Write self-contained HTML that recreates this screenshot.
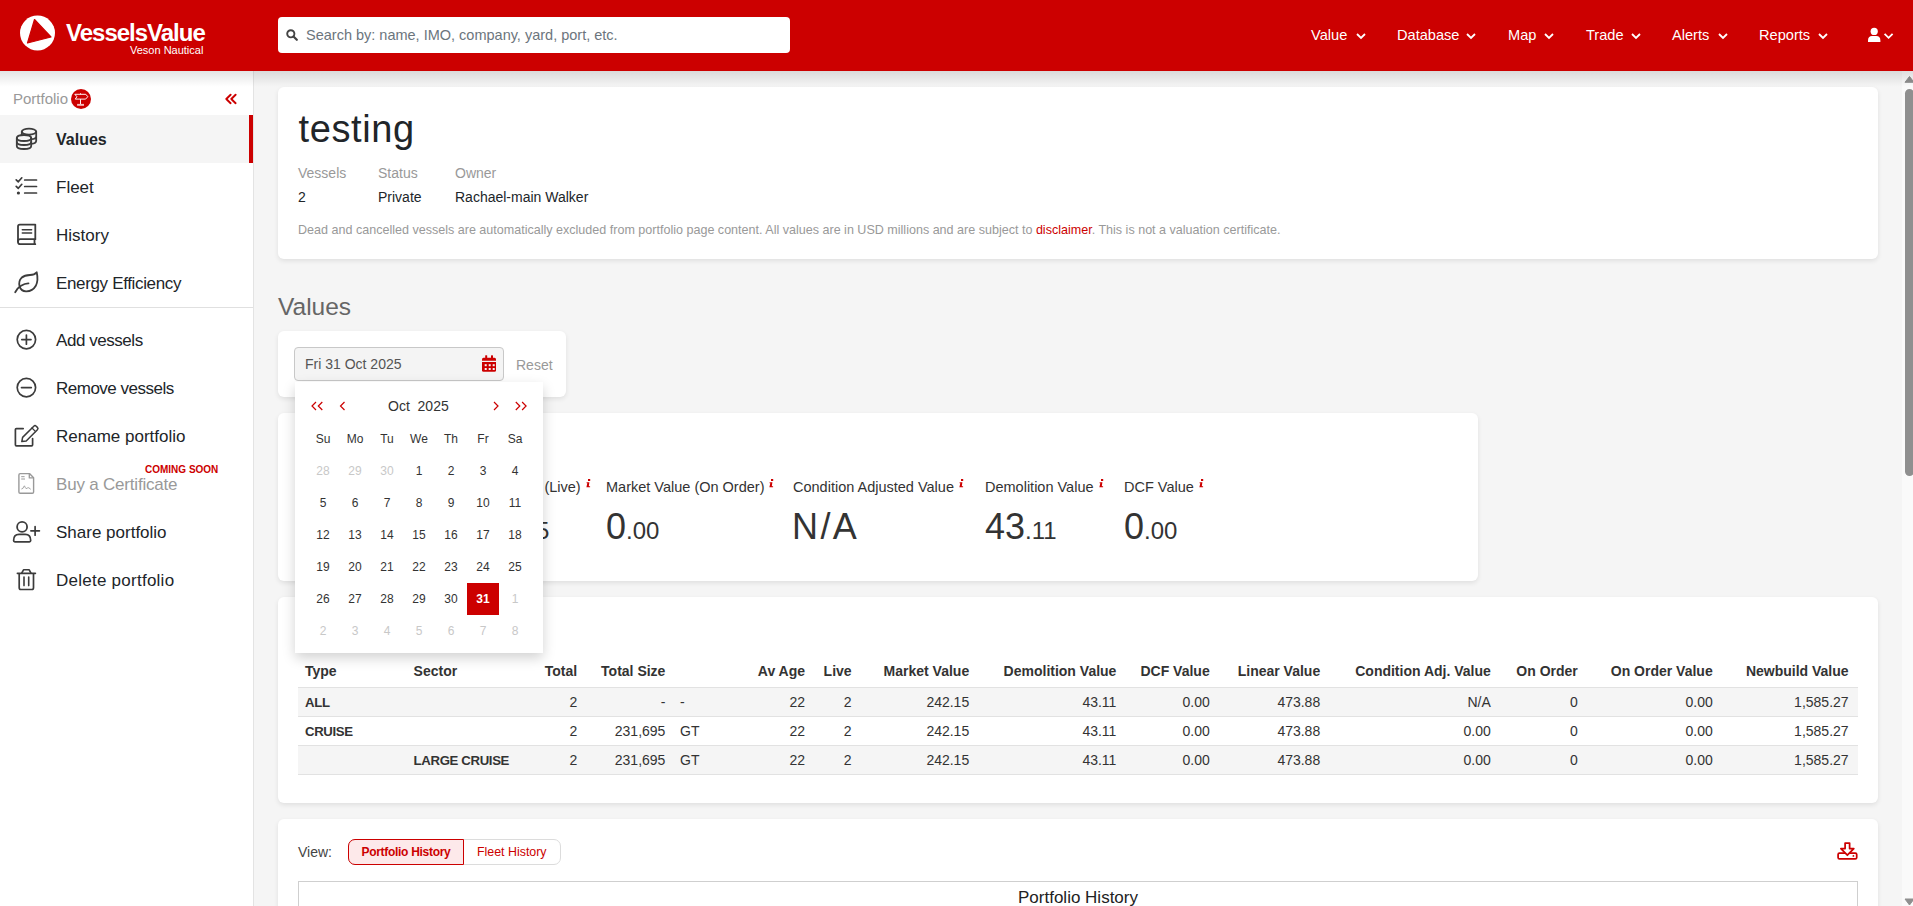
<!DOCTYPE html>
<html><head><meta charset="utf-8">
<style>
*{box-sizing:border-box;margin:0;padding:0}
html,body{width:1913px;height:906px;overflow:hidden}
body{font-family:"Liberation Sans",sans-serif;background:#f5f5f5;position:relative;color:#333}
.abs{position:absolute;white-space:nowrap}
#hdr{position:absolute;left:0;top:0;width:1913px;height:71px;background:#cc0000;z-index:5}
#hshadow{position:absolute;left:0;top:71px;width:1913px;height:16px;background:linear-gradient(rgba(0,0,0,0.11),rgba(0,0,0,0.02) 80%,rgba(0,0,0,0));z-index:4}
#side{position:absolute;left:0;top:71px;width:254px;height:835px;background:#fff;border-right:1px solid #e3e3e3}
.card{position:absolute;background:#fff;border-radius:6px;box-shadow:0 2px 5px rgba(0,0,0,0.09)}
.nav{position:absolute;top:25px;color:#fff;font-size:14.6px;line-height:20px}
.chev{position:absolute;top:33px}
.sitem{position:absolute;left:56px;font-size:17px;line-height:20px;color:#212529}
.sicon{position:absolute}
.lbl{font-size:14px;line-height:20px;color:#999}
.val{font-size:14px;line-height:20px;color:#212529}
.vl{top:477px;font-size:14.5px;line-height:20px;color:#333}
.ii{display:inline-block;margin-left:5px;vertical-align:top;margin-top:2px;height:9px}
.ii svg{display:block}
.vv{top:504.5px;font-size:36px;line-height:44px;color:#333}
.vv small{font-size:24px}
.th{position:absolute;top:661px;font-size:14px;font-weight:700;line-height:20px;color:#333;white-space:nowrap}
.td{position:absolute;font-size:14px;line-height:20px;color:#333;white-space:nowrap}
.dp{position:absolute;width:32px;text-align:center;font-size:12px;line-height:32px;color:#333}
</style></head><body>
<div id="hdr">
  <svg class="abs" style="left:19px;top:15px" width="37" height="37" viewBox="0 0 37 37">
    <circle cx="18.5" cy="18" r="17.5" fill="#fff"/>
    <path d="M15.5 4.5 L32 22 L8.5 28 Z" fill="#cc0000" stroke="#cc0000" stroke-width="1.2" stroke-linejoin="round"/>
  </svg>
  <div class="abs" style="left:66px;top:18px;font-size:24px;font-weight:700;color:#fff;letter-spacing:-1px;line-height:30px">VesselsValue</div>
  <div class="abs" style="left:130px;top:43px;font-size:11px;color:#fff;line-height:14px">Veson Nautical</div>
  <div class="abs" style="left:278px;top:17px;width:512px;height:36px;background:#fff;border-radius:4px"></div>
  <svg class="abs" style="left:286px;top:29px" width="12" height="12" viewBox="0 0 12 12"><circle cx="4.8" cy="4.8" r="3.6" fill="none" stroke="#444" stroke-width="1.9"/><path d="M7.5 7.5 L10.8 10.8" stroke="#444" stroke-width="2.2" stroke-linecap="round"/></svg>
  <div class="abs" style="left:306px;top:25px;font-size:14.5px;line-height:20px;color:#6c757d">Search by: name, IMO, company, yard, port, etc.</div>
  <div class="nav" style="left:1311px">Value</div>
  <div class="nav" style="left:1397px">Database</div>
  <div class="nav" style="left:1508px">Map</div>
  <div class="nav" style="left:1586px">Trade</div>
  <div class="nav" style="left:1672px">Alerts</div>
  <div class="nav" style="left:1759px">Reports</div>
  <svg class="chev" style="left:1356px" width="10" height="7" viewBox="0 0 10 7"><path d="M1 1 L5 5 L9 1" fill="none" stroke="#fff" stroke-width="1.8"/></svg>
  <svg class="chev" style="left:1466px" width="10" height="7" viewBox="0 0 10 7"><path d="M1 1 L5 5 L9 1" fill="none" stroke="#fff" stroke-width="1.8"/></svg>
  <svg class="chev" style="left:1544px" width="10" height="7" viewBox="0 0 10 7"><path d="M1 1 L5 5 L9 1" fill="none" stroke="#fff" stroke-width="1.8"/></svg>
  <svg class="chev" style="left:1631px" width="10" height="7" viewBox="0 0 10 7"><path d="M1 1 L5 5 L9 1" fill="none" stroke="#fff" stroke-width="1.8"/></svg>
  <svg class="chev" style="left:1718px" width="10" height="7" viewBox="0 0 10 7"><path d="M1 1 L5 5 L9 1" fill="none" stroke="#fff" stroke-width="1.8"/></svg>
  <svg class="chev" style="left:1818px" width="10" height="7" viewBox="0 0 10 7"><path d="M1 1 L5 5 L9 1" fill="none" stroke="#fff" stroke-width="1.8"/></svg>
  <svg class="abs" style="left:1867px;top:27px" width="28" height="16" viewBox="0 0 28 16">
    <circle cx="7.2" cy="4.4" r="3.6" fill="#fff"/>
    <path d="M1 15 L1 13.5 Q1 9 5 9 L9.4 9 Q13.4 9 13.4 13.5 L13.4 15 Z" fill="#fff"/>
    <path d="M17.6 6.8 L21.6 10.8 L25.6 6.8" fill="none" stroke="#fff" stroke-width="1.8"/>
  </svg>
</div>
<div id="hshadow"></div>

<div id="side">
  <div class="abs" style="left:13px;top:18px;font-size:15px;line-height:20px;color:#999">Portfolio</div>
  <svg class="abs" style="left:71px;top:18px" width="20" height="20" viewBox="0 0 20 20">
    <circle cx="10" cy="10" r="10" fill="#cc0000"/>
    <path d="M3.8 5.3 L14.8 5.3 L16.8 7.7 L14.6 10.1 L4.3 10.1 L5.9 7.7 Z" fill="none" stroke="#fff" stroke-width="0.95" stroke-linejoin="round"/>
    <path d="M9.5 4.3 L9.5 5.3 M9.5 10.1 L9.5 15" stroke="#fff" stroke-width="0.95"/>
    <rect x="6.1" y="14.9" width="6.9" height="1.9" fill="#fff" opacity="0.75"/>
  </svg>
  <svg class="abs" style="left:225px;top:22px" width="12" height="12" viewBox="0 0 12 12"><path d="M5.6 1.7 L1.3 5.95 L5.6 10.2 M10.6 1.7 L6.3 5.95 L10.6 10.2" fill="none" stroke="#cc0000" stroke-width="1.9" stroke-linecap="round" stroke-linejoin="round"/></svg>

  <div class="abs" style="left:0;top:44px;width:253px;height:48px;background:#f5f5f5"></div>
  <div class="abs" style="left:249px;top:44px;width:4px;height:48px;background:#cc0000"></div>
  <div class="abs" style="left:0;top:236px;width:253px;height:1px;background:#e0e0e0"></div>

  <div class="sitem" style="top:59px;font-size:16px;font-weight:700">Values</div>
  <div class="sitem" style="top:107px">Fleet</div>
  <div class="sitem" style="top:155px">History</div>
  <div class="sitem" style="top:203px;letter-spacing:-0.35px">Energy Efficiency</div>
  <div class="sitem" style="top:260px;letter-spacing:-0.45px">Add vessels</div>
  <div class="sitem" style="top:308px;letter-spacing:-0.5px">Remove vessels</div>
  <div class="sitem" style="top:356px">Rename portfolio</div>
  <div class="sitem" style="top:404px;color:#999;letter-spacing:-0.2px">Buy a Certificate</div>
  <div class="abs" style="left:145px;top:393px;font-size:10px;font-weight:700;line-height:12px;color:#cc0000">COMING SOON</div>
  <div class="sitem" style="top:452px">Share portfolio</div>
  <div class="sitem" style="top:500px;letter-spacing:0.25px">Delete portfolio</div>
</div>


<svg class="abs" style="left:0;top:0;z-index:3" width="50" height="906" viewBox="0 0 50 906" fill="none" stroke="#3c3c3c" stroke-width="1.8" stroke-linecap="round" stroke-linejoin="round">
  <!-- coins -->
  <ellipse cx="29" cy="131.6" rx="7.2" ry="3"/>
  <path d="M21.8 131.6 V135.5 M36.2 131.6 V140.8 M36.2 136.2 Q36.2 139 31.5 139.2 M36.2 140.8 Q36.2 143.6 31.5 143.8"/>
  <path d="M16.8 138 Q16.8 135 24 135 Q31.2 135 31.2 138 V146 Q31.2 149 24 149 Q16.8 149 16.8 146 Z" fill="#f4f4f4"/>
  <path d="M16.8 138 Q16.8 141 24 141 Q31.2 141 31.2 138 M16.8 142 Q16.8 145 24 145 Q31.2 145 31.2 142"/>
  <!-- fleet -->
  <path d="M16.2 179.8 L18.3 181.8 L21.8 177.8 M16.2 186.3 L18.3 188.3 L21.8 184.3" stroke-width="1.7"/>
  <circle cx="18.4" cy="193" r="1.6" fill="#3c3c3c" stroke="none"/>
  <path d="M24.7 180 H36.5 M24.7 186.5 H36.5 M24.7 193 H36.5" stroke-width="1.7"/>
  <!-- history book -->
  <path d="M35.3 239.2 V224.6 H19.8 Q18 224.6 18 226.4 V242 Q18 244.2 20.2 244.2 H35.3"/>
  <path d="M18 241.5 Q18 239.2 20.4 239.2 H35.3 M34.5 239.5 V244"/>
  <path d="M22.3 229.8 H31.6 M22.3 233 H31.6" stroke-width="1.5"/>
  <!-- leaf -->
  <path d="M15.2 292.2 Q18 287.5 21 285.8 Q25 283.2 28.5 283.3"/>
  <path d="M19.6 286.6 Q18.2 281 21.5 277.8 Q24.5 275.2 30 275 Q34.5 274.8 36.7 272.3 Q38.6 280.5 35.8 285.8 Q32.5 291.6 26 291.4 Q21.2 291.2 19.6 286.6 Z"/>
  <!-- add -->
  <circle cx="26.4" cy="339.6" r="9.2" stroke-width="1.7"/>
  <path d="M26.4 335 V344.2 M21.8 339.6 H31" stroke-width="1.7"/>
  <!-- remove -->
  <circle cx="26.4" cy="387.6" r="9.2" stroke-width="1.7"/>
  <path d="M21.5 387.6 H31.3" stroke-width="1.7"/>
  <!-- rename -->
  <path d="M23.2 428.6 H16.4 Q15.4 428.6 15.4 429.6 V444.8 Q15.4 445.8 16.4 445.8 H31.6 Q32.6 445.8 32.6 444.8 V438.5" stroke-width="1.7"/>
  <path d="M21.8 441.6 L22.6 437.4 L33.8 426.2 Q35 425 36.2 426.2 L37.4 427.4 Q38.6 428.6 37.4 429.8 L26.2 441 Z" stroke-width="1.5"/>
  <path d="M32 428 L35.6 431.6" stroke-width="1.3"/>
  <!-- certificate -->
  <path d="M29.5 473.6 H20.2 Q18.9 473.6 18.9 474.9 V492 Q18.9 493.2 20.2 493.2 H32.3 Q33.6 493.2 33.6 492 V477.7 Z" stroke="#999" stroke-width="1.4"/>
  <path d="M29.3 473.8 V477.9 H33.4" stroke="#999" stroke-width="1.3"/>
  <path d="M21.6 476.7 H24.2 M21.6 479 H24.6" stroke="#999" stroke-width="1"/>
  <path d="M21.8 489 Q23.2 489 23.8 486.6 Q24.4 484.6 25.2 487.4 Q26 489.6 27.3 488 Q28.5 486.8 30.5 489" stroke="#999" stroke-width="0.9"/>
  <!-- share user plus -->
  <circle cx="22.1" cy="526.9" r="5"/>
  <path d="M13.6 540.6 Q13.6 534.4 19 534.4 H25.3 Q30.7 534.4 30.7 540.6 Q30.7 541.9 29.4 541.9 H14.9 Q13.6 541.9 13.6 540.6 Z" stroke-width="1.7"/>
  <path d="M35.1 526.5 V535.2 M30.9 530.8 H39.4" stroke-width="1.7"/>
  <!-- trash -->
  <path d="M17.4 573.3 H35.4" stroke-width="1.7"/>
  <path d="M21.8 573 L23.5 569.8 H29.2 L30.9 573" stroke-width="1.6"/>
  <path d="M19.2 573.8 V587.8 Q19.2 589.5 20.9 589.5 H31.8 Q33.5 589.5 33.5 587.8 V573.8" stroke-width="1.7"/>
  <path d="M24 577 V585.6 M28.7 577 V585.6" stroke-width="1.6"/>
</svg>

<!-- card 1 -->
<div class="card" style="left:278px;top:87px;width:1600px;height:172px"></div>
<div class="abs" style="left:298.5px;top:106px;font-size:38px;letter-spacing:0.6px;line-height:46px;color:#212529">testing</div>
<div class="abs lbl" style="left:298px;top:163px">Vessels</div>
<div class="abs lbl" style="left:378px;top:163px">Status</div>
<div class="abs lbl" style="left:455px;top:163px">Owner</div>
<div class="abs val" style="left:298px;top:187px">2</div>
<div class="abs val" style="left:378px;top:187px">Private</div>
<div class="abs val" style="left:455px;top:187px">Rachael-main Walker</div>
<div class="abs" style="left:298px;top:222px;font-size:12.55px;line-height:16px;color:#999">Dead and cancelled vessels are automatically excluded from portfolio page content. All values are in USD millions and are subject to <span style="color:#cc0000">disclaimer</span>. This is not a valuation certificate.</div>

<div class="abs" style="left:278px;top:293px;font-size:24.5px;line-height:28px;color:#666">Values</div>

<!-- date card -->
<div class="card" style="left:278px;top:331px;width:288px;height:66px"></div>
<div class="abs" style="left:294px;top:347px;width:210px;height:34px;background:#f4f4f4;border:1px solid #c8c8c8;border-radius:4px"></div>
<div class="abs" style="left:305px;top:354px;font-size:14px;line-height:20px;color:#555">Fri 31 Oct 2025</div>
<svg class="abs" style="left:482px;top:355px" width="14" height="17" viewBox="0 0 14 17">
  <rect x="3.2" y="0.3" width="2" height="3" rx="0.5" fill="#cc0000"/><rect x="9" y="0.3" width="2" height="3" rx="0.5" fill="#cc0000"/>
  <path d="M0 4.2 Q0 2.7 1.5 2.7 H12.5 Q14 2.7 14 4.2 V5.8 H0 Z" fill="#cc0000"/>
  <path d="M0 7 H14 V15.2 Q14 16.7 12.5 16.7 H1.5 Q0 16.7 0 15.2 Z" fill="#cc0000"/>
  <g fill="#f4f4f4"><rect x="2.7" y="9.2" width="2" height="2"/><rect x="6.7" y="9.2" width="2" height="2"/><rect x="10.7" y="9.2" width="2" height="2"/><rect x="2.7" y="13" width="2" height="2"/><rect x="6.7" y="13" width="2" height="2"/><rect x="10.7" y="13" width="2" height="2"/></g>
</svg>
<div class="abs" style="left:516px;top:355px;font-size:14px;line-height:20px;color:#999">Reset</div>

<!-- values card -->
<div class="card" style="left:278px;top:413px;width:1200px;height:168px"></div>
<div class="abs vl" style="left:456px">Market Value (Live)<span class="ii"><svg width="5" height="9" viewBox="0 0 5 9"><rect x="2" y="0" width="2.2" height="2" fill="#cc0000"/><path d="M0.6 3.2 H3.4 L2.8 7.3 H4.1 V8.3 H0.4 L1.3 4.2 H0.6 Z" fill="#cc0000"/></svg></span></div>
<div class="abs vv" style="left:456px">242<small>.15</small></div>
<div class="abs vl" style="left:606px">Market Value (On Order)<span class="ii"><svg width="5" height="9" viewBox="0 0 5 9"><rect x="2" y="0" width="2.2" height="2" fill="#cc0000"/><path d="M0.6 3.2 H3.4 L2.8 7.3 H4.1 V8.3 H0.4 L1.3 4.2 H0.6 Z" fill="#cc0000"/></svg></span></div>
<div class="abs vv" style="left:606px">0<small>.00</small></div>
<div class="abs vl" style="left:793px">Condition Adjusted Value<span class="ii"><svg width="5" height="9" viewBox="0 0 5 9"><rect x="2" y="0" width="2.2" height="2" fill="#cc0000"/><path d="M0.6 3.2 H3.4 L2.8 7.3 H4.1 V8.3 H0.4 L1.3 4.2 H0.6 Z" fill="#cc0000"/></svg></span></div>
<div class="abs vv" style="left:792px;letter-spacing:2.4px">N/A</div>
<div class="abs vl" style="left:985px">Demolition Value<span class="ii"><svg width="5" height="9" viewBox="0 0 5 9"><rect x="2" y="0" width="2.2" height="2" fill="#cc0000"/><path d="M0.6 3.2 H3.4 L2.8 7.3 H4.1 V8.3 H0.4 L1.3 4.2 H0.6 Z" fill="#cc0000"/></svg></span></div>
<div class="abs vv" style="left:985px">43<small>.11</small></div>
<div class="abs vl" style="left:1124px">DCF Value<span class="ii"><svg width="5" height="9" viewBox="0 0 5 9"><rect x="2" y="0" width="2.2" height="2" fill="#cc0000"/><path d="M0.6 3.2 H3.4 L2.8 7.3 H4.1 V8.3 H0.4 L1.3 4.2 H0.6 Z" fill="#cc0000"/></svg></span></div>
<div class="abs vv" style="left:1124px">0<small>.00</small></div>

<!-- table card -->
<div class="card" style="left:278px;top:597px;width:1600px;height:206px"></div>
<div class="abs" style="left:298px;top:687px;width:1560px;height:1px;background:#e2e2e2"></div>
<div class="abs" style="left:298px;top:688px;width:1560px;height:28px;background:#f5f5f5"></div>
<div class="abs" style="left:298px;top:716px;width:1560px;height:1px;background:#e2e2e2"></div>
<div class="abs" style="left:298px;top:745px;width:1560px;height:1px;background:#e2e2e2"></div>
<div class="abs" style="left:298px;top:746px;width:1560px;height:28px;background:#f5f5f5"></div>
<div class="abs" style="left:298px;top:774px;width:1560px;height:1px;background:#e2e2e2"></div>
<div class="th" style="left:305px">Type</div>
<div class="th" style="left:413.6px">Sector</div>
<div class="th" style="right:1335.8px">Total</div>
<div class="th" style="right:1247.6px">Total Size</div>
<div class="th" style="right:1108.0px">Av Age</div>
<div class="th" style="right:1061.4px">Live</div>
<div class="th" style="right:943.8px">Market Value</div>
<div class="th" style="right:796.6px">Demolition Value</div>
<div class="th" style="right:703.3px">DCF Value</div>
<div class="th" style="right:592.8px">Linear Value</div>
<div class="th" style="right:422.2px">Condition Adj. Value</div>
<div class="th" style="right:335.2px">On Order</div>
<div class="th" style="right:200.3px">On Order Value</div>
<div class="th" style="right:64.4px">Newbuild Value</div>
<div class="td" style="left:305px;top:692.5px;font-weight:700;font-size:13.2px;letter-spacing:-0.35px">ALL</div>
<div class="td" style="right:1335.8px;top:692px">2</div>
<div class="td" style="right:1247.6px;top:692px">-</div>
<div class="td" style="left:680px;top:692px">-</div>
<div class="td" style="right:1108.0px;top:692px">22</div>
<div class="td" style="right:1061.4px;top:692px">2</div>
<div class="td" style="right:943.8px;top:692px">242.15</div>
<div class="td" style="right:796.6px;top:692px">43.11</div>
<div class="td" style="right:703.3px;top:692px">0.00</div>
<div class="td" style="right:592.8px;top:692px">473.88</div>
<div class="td" style="right:422.2px;top:692px">N/A</div>
<div class="td" style="right:335.2px;top:692px">0</div>
<div class="td" style="right:200.3px;top:692px">0.00</div>
<div class="td" style="right:64.4px;top:692px">1,585.27</div>
<div class="td" style="left:305px;top:721.5px;font-weight:700;font-size:13.2px;letter-spacing:-0.35px">CRUISE</div>
<div class="td" style="right:1335.8px;top:721px">2</div>
<div class="td" style="right:1247.6px;top:721px">231,695</div>
<div class="td" style="left:680px;top:721px">GT</div>
<div class="td" style="right:1108.0px;top:721px">22</div>
<div class="td" style="right:1061.4px;top:721px">2</div>
<div class="td" style="right:943.8px;top:721px">242.15</div>
<div class="td" style="right:796.6px;top:721px">43.11</div>
<div class="td" style="right:703.3px;top:721px">0.00</div>
<div class="td" style="right:592.8px;top:721px">473.88</div>
<div class="td" style="right:422.2px;top:721px">0.00</div>
<div class="td" style="right:335.2px;top:721px">0</div>
<div class="td" style="right:200.3px;top:721px">0.00</div>
<div class="td" style="right:64.4px;top:721px">1,585.27</div>
<div class="td" style="left:413.6px;top:750.5px;font-weight:700;font-size:13.2px;letter-spacing:-0.35px">LARGE CRUISE</div>
<div class="td" style="right:1335.8px;top:750px">2</div>
<div class="td" style="right:1247.6px;top:750px">231,695</div>
<div class="td" style="left:680px;top:750px">GT</div>
<div class="td" style="right:1108.0px;top:750px">22</div>
<div class="td" style="right:1061.4px;top:750px">2</div>
<div class="td" style="right:943.8px;top:750px">242.15</div>
<div class="td" style="right:796.6px;top:750px">43.11</div>
<div class="td" style="right:703.3px;top:750px">0.00</div>
<div class="td" style="right:592.8px;top:750px">473.88</div>
<div class="td" style="right:422.2px;top:750px">0.00</div>
<div class="td" style="right:335.2px;top:750px">0</div>
<div class="td" style="right:200.3px;top:750px">0.00</div>
<div class="td" style="right:64.4px;top:750px">1,585.27</div>

<!-- history card -->
<div class="card" style="left:278px;top:819px;width:1600px;height:120px"></div>
<div class="abs" style="left:298px;top:842px;font-size:14px;line-height:20px;color:#444">View:</div>
<div class="abs" style="left:348px;top:839px;width:213px;height:26px;border:1px solid #dcdcdc;border-radius:7px"></div>
<div class="abs" style="left:348px;top:839px;width:116px;height:26px;background:#fde9ea;border:1px solid #cc0000;border-radius:7px 0 0 7px"></div>
<div class="abs" style="left:361.5px;top:843px;font-size:12px;font-weight:700;letter-spacing:-0.3px;line-height:18px;color:#cc0000">Portfolio History</div>
<div class="abs" style="left:477px;top:843px;font-size:12.4px;line-height:18px;color:#cc0000">Fleet History</div>
<svg class="abs" style="left:1832px;top:836px" width="30" height="30" viewBox="1832 836 30 30" fill="none" stroke="#cc0000" stroke-width="1.75" stroke-linejoin="round">
  <rect x="1838.1" y="853" width="18.6" height="5.9" rx="1.4"/>
  <path d="M1845.1 843 H1849.6 V848.6 H1853.8 L1847.35 855.2 L1840.9 848.6 H1845.1 Z" fill="#fff"/>
  <circle cx="1853.4" cy="855.9" r="0.9" fill="#cc0000" stroke="none"/>
</svg>
<div class="abs" style="left:298px;top:881px;width:1560px;height:40px;border:1px solid #cfcfcf;background:#fff"></div>
<div class="abs" style="left:1018px;top:887px;font-size:17px;line-height:22px;color:#222">Portfolio History</div>

<!-- scrollbar -->
<div class="abs" style="left:1902px;top:71px;width:15px;height:835px;background:#fafafa"></div>
<svg class="abs" style="left:1902px;top:71px" width="15" height="835" viewBox="0 0 15 835">
  <path d="M7.5 5.5 L12 11.3 H3 Z" fill="#8f8f8f" stroke="#8f8f8f" stroke-width="1" stroke-linejoin="round"/>
  <rect x="3" y="18" width="9" height="387" rx="4.5" fill="#8f8f8f"/>
  <path d="M7.5 834 L12 828 H3 Z" fill="#8f8f8f" stroke="#8f8f8f" stroke-width="1" stroke-linejoin="round"/>
</svg>

<!-- datepicker popup -->
<div class="abs" style="left:295px;top:382px;width:248px;height:271px;background:#fff;box-shadow:0 5px 12px rgba(0,0,0,0.18);z-index:6" id="dp"><svg class="abs" style="left:0;top:0" width="248" height="40" viewBox="295 382 248 40" fill="none" stroke="#cc0000" stroke-width="1.2"><path d="M316.0 402 L312.0 406 L316.0 410" /><path d="M322.3 402 L318.3 406 L322.3 410" /><path d="M344.5 402 L340.5 406 L344.5 410" /><path d="M494.0 402 L498.0 406 L494.0 410" /><path d="M515.8 402 L519.8 406 L515.8 410" /><path d="M522.1 402 L526.1 406 L522.1 410" /></svg>
<div class="abs" style="left:93px;top:14px;font-size:14px;line-height:20px;color:#333">Oct&nbsp; 2025</div>
<div class="dp" style="left:12px;top:41px">Su</div>
<div class="dp" style="left:44px;top:41px">Mo</div>
<div class="dp" style="left:76px;top:41px">Tu</div>
<div class="dp" style="left:108px;top:41px">We</div>
<div class="dp" style="left:140px;top:41px">Th</div>
<div class="dp" style="left:172px;top:41px">Fr</div>
<div class="dp" style="left:204px;top:41px">Sa</div>
<div class="dp" style="left:12px;top:73px;color:#c8c8c8">28</div>
<div class="dp" style="left:44px;top:73px;color:#c8c8c8">29</div>
<div class="dp" style="left:76px;top:73px;color:#c8c8c8">30</div>
<div class="dp" style="left:108px;top:73px">1</div>
<div class="dp" style="left:140px;top:73px">2</div>
<div class="dp" style="left:172px;top:73px">3</div>
<div class="dp" style="left:204px;top:73px">4</div>
<div class="dp" style="left:12px;top:105px">5</div>
<div class="dp" style="left:44px;top:105px">6</div>
<div class="dp" style="left:76px;top:105px">7</div>
<div class="dp" style="left:108px;top:105px">8</div>
<div class="dp" style="left:140px;top:105px">9</div>
<div class="dp" style="left:172px;top:105px">10</div>
<div class="dp" style="left:204px;top:105px">11</div>
<div class="dp" style="left:12px;top:137px">12</div>
<div class="dp" style="left:44px;top:137px">13</div>
<div class="dp" style="left:76px;top:137px">14</div>
<div class="dp" style="left:108px;top:137px">15</div>
<div class="dp" style="left:140px;top:137px">16</div>
<div class="dp" style="left:172px;top:137px">17</div>
<div class="dp" style="left:204px;top:137px">18</div>
<div class="dp" style="left:12px;top:169px">19</div>
<div class="dp" style="left:44px;top:169px">20</div>
<div class="dp" style="left:76px;top:169px">21</div>
<div class="dp" style="left:108px;top:169px">22</div>
<div class="dp" style="left:140px;top:169px">23</div>
<div class="dp" style="left:172px;top:169px">24</div>
<div class="dp" style="left:204px;top:169px">25</div>
<div class="dp" style="left:12px;top:201px">26</div>
<div class="dp" style="left:44px;top:201px">27</div>
<div class="dp" style="left:76px;top:201px">28</div>
<div class="dp" style="left:108px;top:201px">29</div>
<div class="dp" style="left:140px;top:201px">30</div>
<div class="dp" style="left:172px;top:201px;background:#cc0000;color:#fff;font-weight:700">31</div>
<div class="dp" style="left:204px;top:201px;color:#c8c8c8">1</div>
<div class="dp" style="left:12px;top:233px;color:#c8c8c8">2</div>
<div class="dp" style="left:44px;top:233px;color:#c8c8c8">3</div>
<div class="dp" style="left:76px;top:233px;color:#c8c8c8">4</div>
<div class="dp" style="left:108px;top:233px;color:#c8c8c8">5</div>
<div class="dp" style="left:140px;top:233px;color:#c8c8c8">6</div>
<div class="dp" style="left:172px;top:233px;color:#c8c8c8">7</div>
<div class="dp" style="left:204px;top:233px;color:#c8c8c8">8</div></div>
</body></html>
